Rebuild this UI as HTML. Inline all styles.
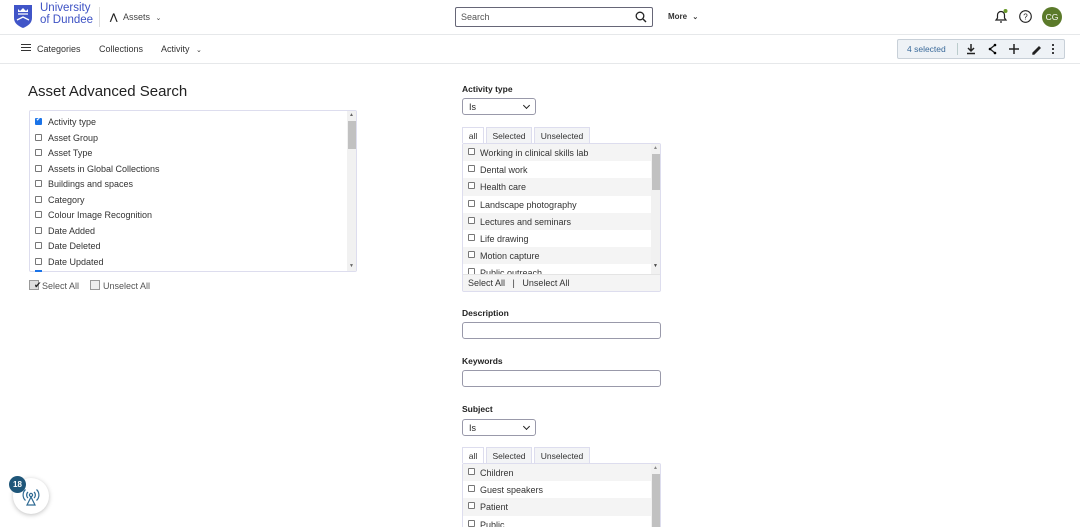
<!DOCTYPE html>
<html><head><meta charset="utf-8"><style>
*{box-sizing:border-box;margin:0;padding:0}
html,body{width:1080px;height:527px;overflow:hidden}
body{background:#fff;font-family:"Liberation Sans",Arial,sans-serif;color:#222;position:relative;font-size:9px}
.a{position:absolute}
.cb{position:absolute;width:7px;height:7px;border:1px solid #777;border-radius:1px;background:#fff}
.lbl{font-weight:bold;font-size:8.5px;color:#222}
.sel{position:absolute;width:74px;height:17px;border:1px solid #99a;border-radius:3px;font-size:9px;padding:3px 6px}
.sel:after{content:"";position:absolute;right:6px;top:4px;width:4px;height:4px;border-right:1.5px solid #222;border-bottom:1.5px solid #222;transform:rotate(45deg)}
.tab{position:absolute;height:16px;border:1px solid #dde;border-bottom:none;background:#f3f4f6;font-size:8.5px;padding-top:3px;text-align:center;color:#333}
.inp{position:absolute;left:462px;width:199px;height:17px;border:1px solid #99a;border-radius:3px}
</style></head><body>
<!-- header -->
<svg class="a" style="left:14px;top:5px" width="18" height="23" viewBox="0 0 18 23"><path d="M0 0h18v13c0 5-4 8-9 10C4 21 0 18 0 13z" fill="#4055c8"/><path d="M3 15l6-3 6 3M4 9h10" stroke="#fff" stroke-width="1.3" fill="none"/><path d="M4 4l2 2 3-3 3 3 2-2v3H4z" fill="#fff"/></svg>
<div class="a" style="left:40px;top:3px;color:#3d52c4;font-size:11.5px;line-height:11.5px">University<br>of Dundee</div>
<div class="a" style="left:99px;top:7px;width:1px;height:20px;background:#ddd"></div>
<div class="a" style="left:110px;top:12px;font-size:9px;font-weight:bold">⋀</div>
<div class="a" style="left:123px;top:12px;font-size:9px;color:#444">Assets <span style="font-size:7px;margin-left:3px">⌄</span></div>
<div class="a" style="left:455px;top:7px;width:198px;height:20px;border:1px solid #667;border-radius:2px;padding:4px 5px;color:#555">Search</div>
<svg class="a" style="left:635px;top:11px" width="12" height="12" viewBox="0 0 12 12"><circle cx="5" cy="5" r="3.8" stroke="#222" stroke-width="1.3" fill="none"/><path d="M8 8l3 3" stroke="#222" stroke-width="1.4"/></svg>
<div class="a" style="left:668px;top:12px;font-size:8px;font-weight:bold;color:#333">More <span style="font-size:7px;margin-left:3px">⌄</span></div>
<svg class="a" style="left:994px;top:9px" width="14" height="15" viewBox="0 0 14 15"><path d="M2 11h10l-1.5-2V6a3.5 3.5 0 0 0-7 0v3z M6 13h2" stroke="#222" stroke-width="1.2" fill="none"/><circle cx="11.5" cy="2" r="2" fill="#6a9a2a"/></svg>
<svg class="a" style="left:1019px;top:10px" width="13" height="13" viewBox="0 0 13 13"><circle cx="6.5" cy="6.5" r="5.8" stroke="#222" stroke-width="1.1" fill="none"/><text x="6.5" y="9.5" font-size="8" text-anchor="middle" font-family="Liberation Sans" fill="#222">?</text></svg>
<div class="a" style="left:1042px;top:7px;width:20px;height:20px;border-radius:50%;background:#5b7a2a;color:#fff;font-size:8.5px;text-align:center;line-height:20px">CG</div>
<div class="a" style="left:0;top:34px;width:1080px;height:1px;background:#e6e8ea"></div>
<!-- nav -->
<div class="a" style="left:21px;top:44px;width:10px;height:1.3px;background:#333;box-shadow:0 3px 0 #333,0 6px 0 #333"></div>
<div class="a" style="left:37px;top:44px;color:#333">Categories</div>
<div class="a" style="left:99px;top:44px;color:#333">Collections</div>
<div class="a" style="left:161px;top:44px;color:#333">Activity <span style="font-size:7px;margin-left:4px">⌄</span></div>
<div class="a" style="left:897px;top:39px;width:168px;height:20px;border:1px solid #c8d0d8;border-radius:2px;background:#eef2f6"></div>
<div class="a" style="left:907px;top:44px;color:#3a6a9a;font-size:8.5px">4 selected</div>
<div class="a" style="left:957px;top:43px;width:1px;height:12px;background:#bcc"></div>
<svg class="a" style="left:965px;top:43px" width="96" height="12" viewBox="0 0 96 12"><path d="M6 1v7M3 5l3 3 3-3M2 10.5h8" stroke="#222" stroke-width="1.5" fill="none"/><path d="M30 2l-5 4 5 4" stroke="#222" stroke-width="1.3" fill="none"/><circle cx="30" cy="2" r="1.3"/><circle cx="25" cy="6" r="1.3"/><circle cx="30" cy="10" r="1.3"/><path d="M49 1v10M44 6h10" stroke="#222" stroke-width="1.5"/><path d="M68 10l6-6 1 1-6 6h-1z" stroke="#222" stroke-width="1.4"/><circle cx="88" cy="2" r="1" /><circle cx="88" cy="6" r="1"/><circle cx="88" cy="10" r="1"/></svg>
<div class="a" style="left:0;top:63px;width:1080px;height:1px;background:#e6e8ea"></div>
<!-- left -->
<div class="a" style="left:28px;top:83px;font-size:15px;color:#222">Asset Advanced Search</div>
<div class="a" style="left:29px;top:110px;width:328px;height:162px;border:1px solid #dde;border-radius:2px;overflow:hidden">
<div class="a" style="left:317px;top:0;width:10px;height:162px;background:#f1f1f1"></div>
<div class="a" style="left:318px;top:10px;width:8px;height:28px;background:#c1c1c1"></div>
<div class="a" style="left:319px;top:1px;font-size:5px;color:#666">▲</div><div class="a" style="left:319px;top:152px;font-size:5px;color:#666">▼</div>
</div>
<div id="ll"></div>
<div class="a" style="left:29px;top:280px;width:10px;height:10px;border:1px solid #999;background:#ddd"></div>
<div class="a" style="left:34px;top:280px;font-size:9px">✔</div>
<div class="a" style="left:42px;top:281px;color:#555">Select All</div>
<div class="a" style="left:90px;top:280px;width:10px;height:10px;border:1px solid #999;background:#eee"></div>
<div class="a" style="left:103px;top:281px;color:#555">Unselect All</div>
<!-- right -->
<div class="a lbl" style="left:462px;top:84px">Activity type</div>
<div class="sel" style="left:462px;top:98px">Is</div>
<div class="tab" style="left:462px;top:127px;width:22px;background:#fff">all</div>
<div class="tab" style="left:486px;top:127px;width:46px">Selected</div>
<div class="tab" style="left:534px;top:127px;width:56px">Unselected</div>
<div class="a" style="left:462px;top:143px;width:199px;height:149px;border:1px solid #dde;border-radius:2px;overflow:hidden;background:#fff" id="l1"></div>
<div class="a lbl" style="left:462px;top:308px">Description</div>
<div class="inp" style="top:322px"></div>
<div class="a lbl" style="left:462px;top:356px">Keywords</div>
<div class="inp" style="top:370px"></div>
<div class="a lbl" style="left:462px;top:404px">Subject</div>
<div class="sel" style="left:462px;top:419px">Is</div>
<div class="tab" style="left:462px;top:447px;width:22px;background:#fff">all</div>
<div class="tab" style="left:486px;top:447px;width:46px">Selected</div>
<div class="tab" style="left:534px;top:447px;width:56px">Unselected</div>
<div class="a" style="left:462px;top:463px;width:199px;height:64px;border:1px solid #dde;border-bottom:none;border-radius:2px 2px 0 0;overflow:hidden;background:#fff" id="l2"></div>
<!-- badge -->
<div class="a" style="left:13px;top:478px;width:36px;height:36px;border-radius:50%;background:#fff;box-shadow:0 1px 5px rgba(0,0,0,.25)"></div>
<svg class="a" style="left:22px;top:487px" width="18" height="20" viewBox="0 0 18 20"><g stroke="#2f6a93" stroke-width="1.2" fill="none"><circle cx="9" cy="8" r="1.6"/><path d="M6 5a4 4 0 0 0 0 6M12 5a4 4 0 0 1 0 6M3.5 2.5a7.5 7.5 0 0 0 0 11M14.5 2.5a7.5 7.5 0 0 1 0 11M9 10l-4 8h8z"/></g></svg>
<div class="a" style="left:9px;top:476px;width:17px;height:17px;border-radius:50%;background:#1f5679;color:#fff;font-size:8px;text-align:center;line-height:17px;font-weight:bold">18</div>
<script>
var L=["Activity type","Asset Group","Asset Type","Assets in Global Collections","Buildings and spaces","Category","Colour Image Recognition","Date Added","Date Deleted","Date Updated"],h="";
L.forEach(function(t,i){var y=117+i*15.5;h+='<div class="cb" style="left:35px;top:'+(y+1)+'px;'+(i==0?'background:#1a73e8;border-color:#1a73e8':'')+'">'+(i==0?'<span style="position:absolute;left:0;top:-3px;color:#fff;font-size:6px">✔</span>':'')+'</div><div class="a" style="left:48px;top:'+y+'px;color:#333">'+t+'</div>'});
h+='<div class="a" style="left:35px;top:270px;width:7px;height:2px;background:#1a73e8"></div>';
document.getElementById("ll").innerHTML=h;
function mk(id,arr,full){var s="";arr.forEach(function(t,i){var y=i*17.2;s+='<div class="a" style="left:0;top:'+y+'px;width:188px;height:17.2px;background:'+(i%2==0?'#f4f4f4':'#fff')+'"></div><div class="cb" style="left:5px;top:'+(y+4)+'px"></div><div class="a" style="left:17px;top:'+(y+4)+'px;color:#333">'+t+'</div>'});
s+='<div class="a" style="left:188px;top:0;width:10px;height:160px;background:#f1f1f1"></div><div class="a" style="left:189px;top:10px;width:8px;height:'+(full?36:80)+'px;background:#c1c1c1"></div><div class="a" style="left:190px;top:1px;font-size:5px;color:#888">▲</div>';
if(full)s+='<div class="a" style="left:190px;top:119px;font-size:5px;color:#444">▼</div><div class="a" style="left:0;top:130px;width:199px;height:19px;background:#f4f4f4;border-top:1px solid #e4e4e4"></div><div class="a" style="left:5px;top:134px;color:#333">Select All &nbsp; | &nbsp; Unselect All</div>';
document.getElementById(id).innerHTML=s}
mk("l1",["Working in clinical skills lab","Dental work","Health care","Landscape photography","Lectures and seminars","Life drawing","Motion capture","Public outreach"],1);
mk("l2",["Children","Guest speakers","Patient","Public"],0);
</script>
</body></html>
